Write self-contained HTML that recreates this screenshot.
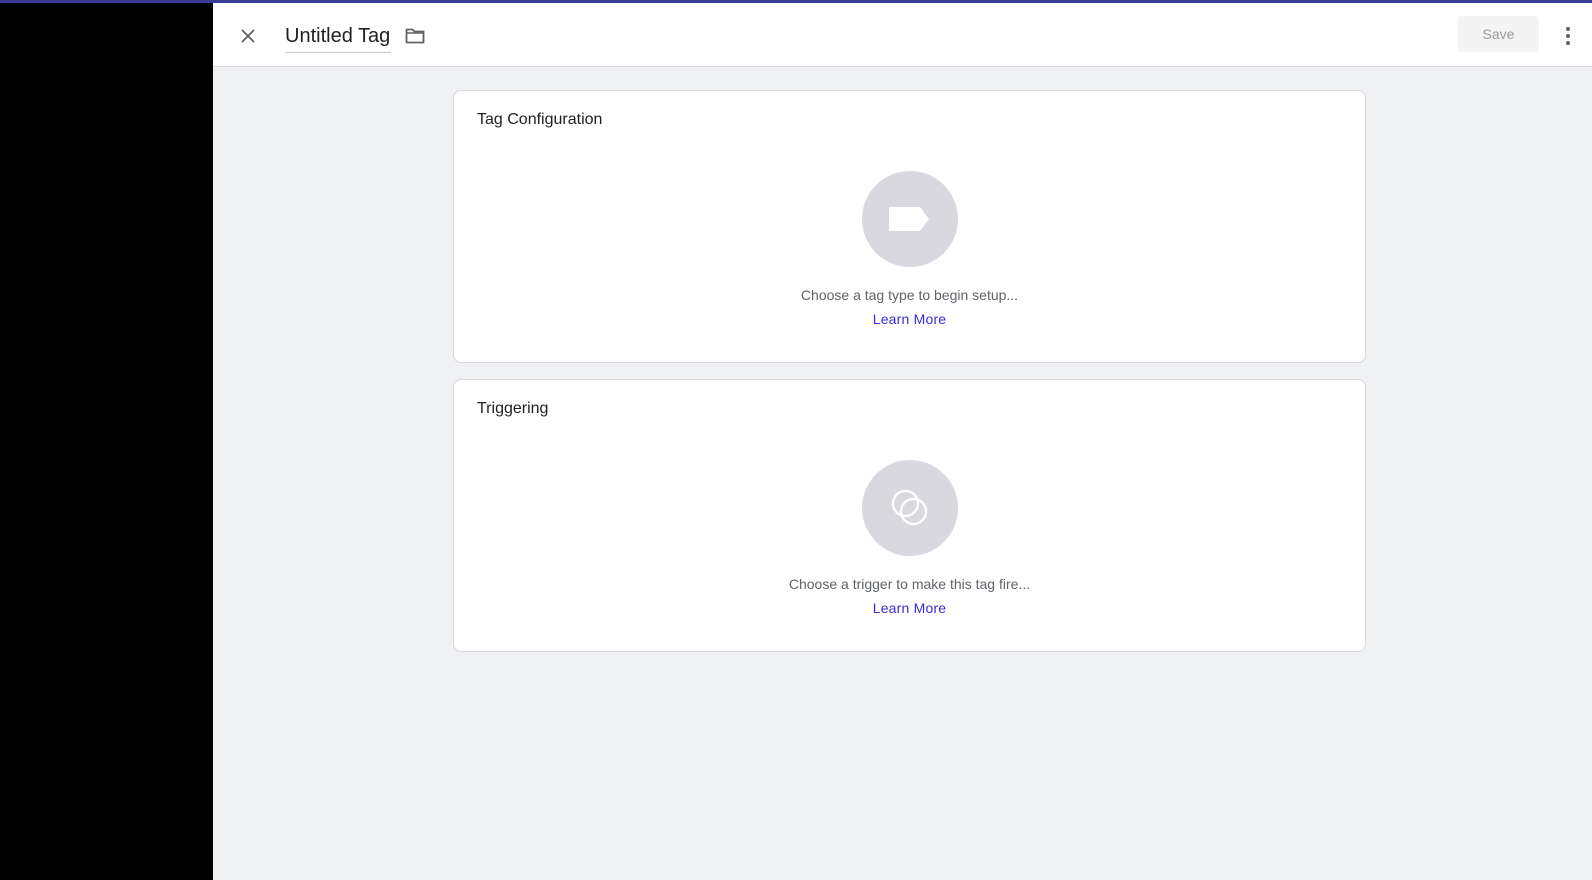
<!DOCTYPE html>
<html><head><style>
*{margin:0;padding:0;box-sizing:border-box}
body{width:1592px;height:880px;overflow:hidden;background:#f0f1f3;font-family:"Liberation Sans",sans-serif;position:relative}
.side{position:absolute;left:0;top:0;width:213px;height:880px;background:#000}
.topline{position:absolute;left:0;top:0;width:1592px;height:3px;background:#3c3a9a}
.hdr{position:absolute;left:213px;top:3px;right:0;height:64px;background:#fff;border-bottom:1px solid #d8d8de}
.card{position:absolute;left:453px;width:913px;background:#fff;border:1px solid #d6d6dc;border-radius:8px}
.ct{position:absolute;left:23px;font-size:16px;color:#202124}
.circ{position:absolute;left:408px;width:96px;height:96px;border-radius:50%;background:#d8d8de}
.msg{position:absolute;left:0;right:0;text-align:center;font-size:14px;color:#5f6368;letter-spacing:0}
.lm{position:absolute;left:0;right:0;text-align:center;font-size:14px;color:#3b2bdc;letter-spacing:.2px}
</style></head><body>
<div class="side"></div>
<div class="hdr">
<svg style="position:absolute;left:27px;top:25px" width="16" height="16" viewBox="0 0 16 16"><path d="M2 2L14 14M14 2L2 14" stroke="#5f6368" stroke-width="1.8"/></svg>
<div style="position:absolute;left:72px;top:22px;font-size:20px;color:#202124">Untitled Tag</div>
<div style="position:absolute;left:72px;top:49px;width:106px;height:1px;background:#c8c8cc"></div>
<svg style="position:absolute;left:192px;top:25px" width="20" height="16" viewBox="0 0 20 16"><path d="M1.5 1.5h6l2 2h9v11h-17z" fill="none" stroke="#5f6368" stroke-width="1.8"/><path d="M1.5 5h17" stroke="#5f6368" stroke-width="1.5"/></svg>
<div style="position:absolute;left:1245px;top:13px;width:81px;height:36px;background:#f4f4f5;border-radius:4px;color:#9a9a9e;font-size:14px;text-align:center;line-height:37px">Save</div>
<div style="position:absolute;left:1353px;top:24px;width:4px">
<div style="width:4px;height:4px;border-radius:50%;background:#5f6368;margin-bottom:3px"></div>
<div style="width:4px;height:4px;border-radius:50%;background:#5f6368;margin-bottom:3px"></div>
<div style="width:4px;height:4px;border-radius:50%;background:#5f6368"></div></div>
</div>
<div class="topline"></div>
<div class="card" style="top:90px;height:273px">
<div class="ct" style="top:20px">Tag Configuration</div>
<div class="circ" style="top:80px"><svg style="position:absolute;left:27px;top:36px" width="42" height="24" viewBox="0 0 42 24"><path d="M0 0h31l9 12l-9 12h-31z" fill="#fff"/></svg></div>
<div class="msg" style="top:196px">Choose a tag type to begin setup...</div>
<div class="lm" style="top:220px">Learn More</div>
</div>
<div class="card" style="top:379px;height:273px">
<div class="ct" style="top:20px">Triggering</div>
<div class="circ" style="top:80px"><svg style="position:absolute;left:26px;top:26px" width="44" height="44" viewBox="0 0 44 44"><circle cx="17.5" cy="17.5" r="12.5" fill="none" stroke="#fff" stroke-width="2.4"/><circle cx="25.5" cy="25.5" r="12.5" fill="none" stroke="#fff" stroke-width="2.4"/></svg></div>
<div class="msg" style="top:196px">Choose a trigger to make this tag fire...</div>
<div class="lm" style="top:220px">Learn More</div>
</div>
</body></html>
